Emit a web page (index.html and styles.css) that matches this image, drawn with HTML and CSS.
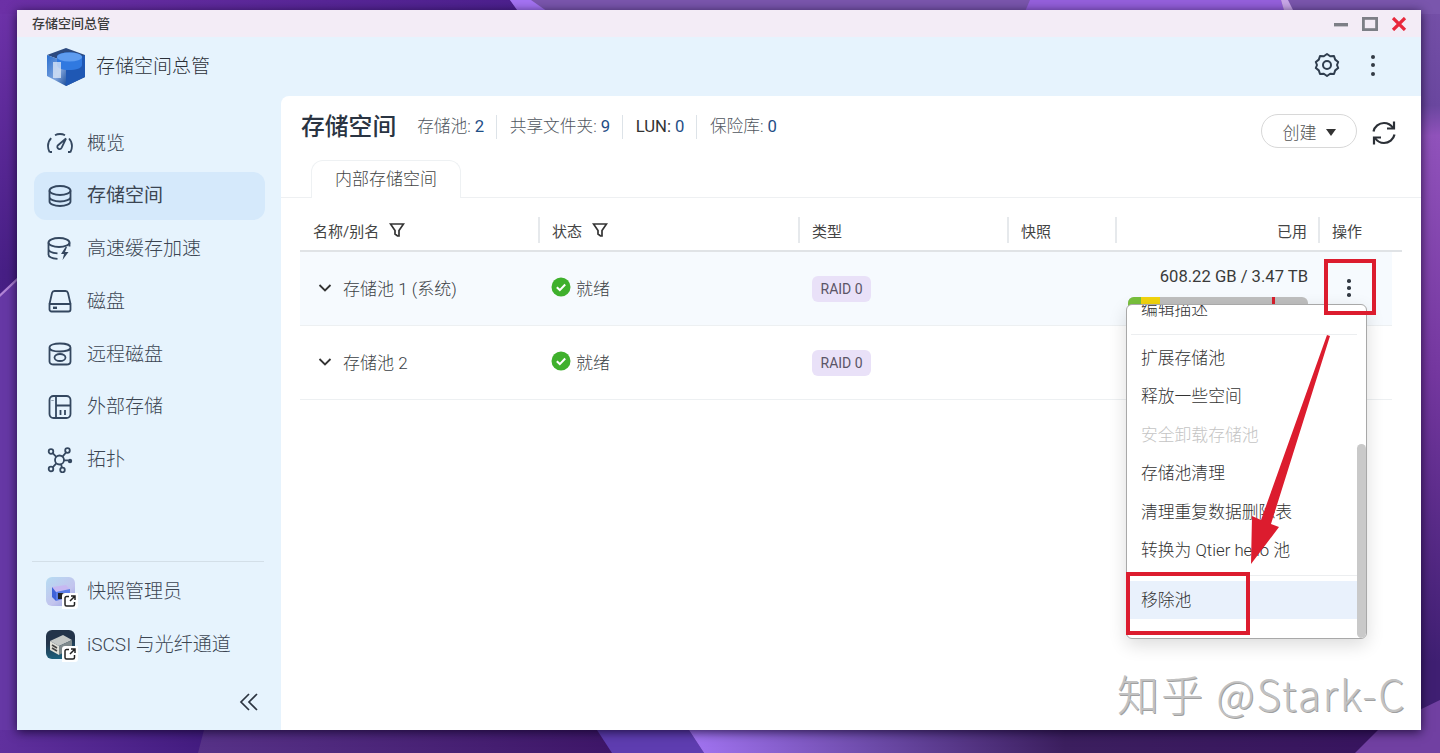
FILE: index.html
```html
<!DOCTYPE html>
<html lang="zh-CN">
<head>
  <meta charset="UTF-8">
  <title>存储空间总管</title>
  <link rel="stylesheet" href="styles.css">
</head>
<body>

<div class="desktop">
  <!-- wallpaper -->
  <svg class="wallpaper" width="1440" height="753" viewBox="0 0 1440 753">
    <defs>
      <linearGradient id="wpBase" x1="0" y1="0" x2="0" y2="1">
        <stop offset="0" stop-color="#6f33aa"/>
        <stop offset="0.36" stop-color="#471f85"/>
        <stop offset="1" stop-color="#3f1a70"/>
      </linearGradient>
      <linearGradient id="wpRight" x1="0" y1="0" x2="0" y2="1">
        <stop offset="0" stop-color="#7550a8"/>
        <stop offset="0.14" stop-color="#6a479f"/>
        <stop offset="0.18" stop-color="#9052bb"/>
        <stop offset="0.5" stop-color="#74379f"/>
        <stop offset="0.88" stop-color="#3f1f72"/>
      </linearGradient>
      <linearGradient id="wpGlow" x1="0" y1="0" x2="1" y2="0">
        <stop offset="0" stop-color="#a274f2"/>
        <stop offset="0.25" stop-color="#6c4aa8"/>
        <stop offset="0.5" stop-color="#3c1f5f"/>
        <stop offset="1" stop-color="#37125f"/>
      </linearGradient>
      <linearGradient id="wpTopLeft" x1="0" y1="0" x2="1" y2="0">
        <stop offset="0" stop-color="#6c30a6"/>
        <stop offset="1" stop-color="#4c208e"/>
      </linearGradient>
      <linearGradient id="wpBottomLeft" x1="0" y1="0" x2="1" y2="0">
        <stop offset="0" stop-color="#60309e"/>
        <stop offset="1" stop-color="#431c80"/>
      </linearGradient>
      <linearGradient id="wpBottomMid" x1="0" y1="0" x2="1" y2="0">
        <stop offset="0" stop-color="#573288"/>
        <stop offset="1" stop-color="#3e1668"/>
      </linearGradient>
    </defs>
    <rect width="1440" height="753" fill="url(#wpBase)"/>
    <rect width="520" height="14" fill="url(#wpTopLeft)"/>
    <rect x="1400" width="40" height="753" fill="url(#wpRight)"/>
    <polygon points="510,0 1440,0 1440,14 520,14" fill="#7a56ad"/>
    <polygon points="510,0 531,0 551,14 520,14" fill="#a473f3"/>
    <polygon points="1030,0 1281,0 1285,14 1024,14" fill="#9560dc"/>
    <polygon points="1281,0 1288,0 1295,14 1285,14" fill="#c9a6e8"/>
    <polygon points="0,294 17,278 17,753 0,753" fill="#6638a5"/>
    <polygon points="0,294 17,278 17,281 0,297" fill="#b184d6"/>
    <rect y="730" width="204" height="23" fill="url(#wpBottomLeft)"/>
    <polygon points="204,730 600,730 615,753 198,753" fill="url(#wpBottomMid)"/>
    <polygon points="597,730 689,730 704,753 612,753" fill="#5e3db0"/>
    <polygon points="689,730 1440,730 1440,753 704,753" fill="url(#wpGlow)"/>
    <polygon points="1378,730 1440,700 1440,753 1355,753" fill="#7140a2"/>
  </svg>

  <div class="window">
    <div class="titlebar">
      <span class="titlebar-name">存储空间总管</span>
      <div class="win-controls">
        <svg width="16" height="14" viewBox="0 0 16 14"><rect x="1" y="6" width="14" height="3.4" fill="#7c7f86"/></svg>
        <svg width="16" height="14" viewBox="0 0 16 14"><rect x="1.4" y="1.4" width="13.2" height="11.2" fill="none" stroke="#7c7f86" stroke-width="2.8"/></svg>
        <svg width="16" height="14" viewBox="0 0 16 14"><path d="M2 1l12 12M14 1L2 13" stroke="#e8283c" stroke-width="3.2" fill="none"/></svg>
      </div>
    </div>

    <div class="appbar">
      <svg class="logo" width="40" height="38" viewBox="0 0 40 38">
        <defs>
          <linearGradient id="logoLeft" x1="0" y1="0" x2="1" y2="1">
            <stop offset="0" stop-color="#2a6fd0"/>
            <stop offset="0.6" stop-color="#7fa4dc"/>
            <stop offset="1" stop-color="#1d4f9c"/>
          </linearGradient>
        </defs>
        <polygon points="20,0 39,7 39,29 20,38 20,14 1,7" fill="#2c4a80"/>
        <polygon points="1,7 20,14 20,38 1,28" fill="url(#logoLeft)"/>
        <polygon points="20,14 39,7 39,29 20,38" fill="#1f58b4"/>
        <path d="M11 9c0-3 5-4.500 12-4.500S36 6 36 9v8c0 3-6 5-13 5s-12-2-12-5z" fill="#3079e0"/>
        <ellipse cx="23.500" cy="9" rx="12.500" ry="4.500" fill="#5e9cf0"/>
        <rect x="7" y="14" width="8" height="16" fill="#dfe9f8" opacity="0.75"/>
      </svg>
      <span class="app-name">存储空间总管</span>
      <svg class="gear" width="26" height="26" viewBox="0 0 26 26" fill="none" stroke="#2f3d4e" stroke-width="2">
        <path d="M13 2l3.200 2.200 3.800-.2 1.200 3.600 3 2.400-1.200 3 1.200 3-3 2.400-1.200 3.600-3.800-.2L13 24l-3.200-2.200-3.800.2-1.200-3.600-3-2.400 1.200-3-1.200-3 3-2.400L6 4l3.800.2z" stroke-linejoin="round"/>
        <circle cx="13" cy="13" r="4"/>
      </svg>
      <div class="kebab kebab-large"><i></i><i></i><i></i></div>
    </div>

    <div class="body">
      <aside class="sidebar">
        <nav class="nav">
          <a class="nav-item">
            <svg width="26" height="24" viewBox="0 0 26 24" class="nav-icon"><path d="M2.500 21C1.500 19 1 17 1 15c0-3 1.200-5.800 3.200-7.800M8 4.200C9.500 3.400 11.200 3 13 3c2 0 3.500.4 5 1.200M22 7.500c1.900 2 3 4.600 3 7.500 0 2-.5 4-1.500 6M2.500 21H5M21 21h2.500"/><path d="M19 7.500l-8 6.700c-1.200 1.200-.8 3 .6 3.600s2.500 0 3.100-1.200z"/></svg>
            概览
          </a>
          <a class="nav-item active">
            <svg width="26" height="24" viewBox="0 0 26 24" class="nav-icon"><ellipse cx="13" cy="6.500" rx="10.500" ry="4.500"/><path d="M2.500 6.500v11c0 2.500 4.700 4.500 10.500 4.500s10.500-2 10.500-4.500v-11M2.500 13c0 2.500 4.700 4.500 10.500 4.500S23.500 15.500 23.500 13"/></svg>
            存储空间
          </a>
          <a class="nav-item">
            <svg width="26" height="24" viewBox="0 0 26 24" class="nav-icon"><ellipse cx="12" cy="5.500" rx="10.500" ry="4.500"/><path d="M1.500 5.500v12c0 2.500 4 4 9 4.300M22.500 5.500v4M1.500 12c0 2.500 4 4 9 4.300"/><path class="fill" d="M18.500 10l-4.500 7h3l-1.500 6 6-8h-3.500l2-5z"/></svg>
            高速缓存加速
          </a>
          <a class="nav-item">
            <svg width="26" height="24" viewBox="0 0 26 24" class="nav-icon"><path d="M2.500 15l2.500-11c.3-1.200 1.200-2 2.500-2h11c1.300 0 2.200.8 2.500 2l2.500 11M2.500 15h21v5.500c0 1.100-.9 2-2 2h-17c-1.100 0-2-.9-2-2z"/><path class="thick" d="M6 18.800h4"/></svg>
            磁盘
          </a>
          <a class="nav-item">
            <svg width="26" height="24" viewBox="0 0 26 24" class="nav-icon"><path d="M2.500 5.500C2.500 3 7.200 1.500 13 1.500s10.500 1.500 10.500 4v14c0 2-2 3-4 3h-13c-2 0-4-1-4-3zM2.500 5.500c0 2.500 4.700 4 10.500 4s10.500-1.500 10.500-4"/><ellipse cx="13" cy="15.500" rx="5.500" ry="3.500"/></svg>
            远程磁盘
          </a>
          <a class="nav-item">
            <svg width="26" height="24" viewBox="0 0 26 24" class="nav-icon"><rect x="2.500" y="1" width="21" height="22" rx="4"/><path d="M9 1v9.500h14.500M9 10.500V23M13.500 15v5M18 15v5"/><path class="thick" d="M5.500 5.500v.5"/></svg>
            外部存储
          </a>
          <a class="nav-item">
            <svg width="26" height="26" viewBox="0 0 26 26" class="nav-icon"><circle cx="12.500" cy="13" r="4.500"/><circle cx="4" cy="4.500" r="2.300"/><circle cx="20.500" cy="3.500" r="2.300"/><circle cx="4" cy="22" r="2.300"/><circle cx="15.500" cy="23" r="2.300"/><circle class="fill" cx="23" cy="14" r="2.200"/><path d="M5.700 6.200l3.600 3.600M19 5.500l-3.500 4.200M5.700 20.300l3.600-4M14 17.300l1 3.500M17 13.400h4"/></svg>
            拓扑
          </a>
        </nav>

        <div class="shortcuts">
          <a class="nav-item shortcut">
            <span class="app-icon app-icon-snap">
              <svg class="app-art" width="29" height="29" viewBox="0 0 29 29"><polygon points="6,10 20,8 24,12 10,15" fill="#c7b8f2"/><polygon points="6,10 10,15 10,24 6,20" fill="#3f62d8"/><polygon points="10,15 24,12 24,20 10,24" fill="#5a7ce8"/><rect x="12" y="16" width="7" height="6" fill="#23252c"/></svg>
              <svg class="ext" width="14" height="14" viewBox="0 0 14 14"><path d="M6 2.500H3.500c-.8 0-1.500.7-1.500 1.500v6.500c0 .8.700 1.500 1.500 1.500H10c.8 0 1.500-.7 1.500-1.500V8M8 2h4v4M12 2L7 7"/></svg>
            </span>
            快照管理员
          </a>
          <a class="nav-item shortcut">
            <span class="app-icon app-icon-iscsi">
              <svg class="app-art" width="29" height="29" viewBox="0 0 29 29"><polygon points="4,11 17,5 26,10 13,16" fill="#c4c8c6"/><polygon points="4,11 13,16 13,25 4,20" fill="#e0e0d8"/><polygon points="13,16 26,10 26,18 13,25" fill="#7f8a8c"/><path d="M6 15l5 3M6 18l5 3" stroke="#444" stroke-width="1.500"/></svg>
              <svg class="ext" width="14" height="14" viewBox="0 0 14 14"><path d="M6 2.500H3.500c-.8 0-1.500.7-1.500 1.500v6.500c0 .8.700 1.500 1.500 1.500H10c.8 0 1.500-.7 1.500-1.500V8M8 2h4v4M12 2L7 7"/></svg>
            </span>
            iSCSI 与光纤通道
          </a>
        </div>
        <div class="collapse-row">
          <svg width="20" height="18" viewBox="0 0 20 18" fill="none" stroke="#2c3440" stroke-width="1.700"><path d="M10 1L2 9l8 8M18 1l-8 8 8 8"/></svg>
        </div>
      </aside>

      <main class="main">
        <div class="main-head">
          <h1 class="page-title">存储空间</h1>
          <ul class="stats">
            <li>存储池: <b>2</b></li>
            <li>共享文件夹: <b>9</b></li>
            <li><em>LUN:</em> <b>0</b></li>
            <li>保险库: <b>0</b></li>
          </ul>
          <button class="btn-create">创建<span class="caret"></span></button>
          <svg class="refresh" width="28" height="28" viewBox="0 0 28 28" fill="none" stroke="#2b2f36" stroke-width="2.200">
            <path d="M3.500 12.500C4.500 7.500 9 4 14 4c4 0 7 2 9 5M24.500 15.500c-1 5-5.500 8.500-10.500 8.500-4 0-7-2-9-5"/>
            <path d="M24 2.500V9.500h-7M4 25.500V18.500h7"/>
          </svg>
        </div>

        <div class="tabs">
          <div class="tab">内部存储空间</div>
        </div>

        <div class="table">
          <div class="thead">
            <div class="th">名称/别名
              <svg width="16" height="16" viewBox="0 0 16 16" class="filter"><path d="M1.500 2h13L10 8.500V14H8.500L6 12V8.500z"/></svg>
            </div>
            <div class="th">状态
              <svg width="16" height="16" viewBox="0 0 16 16" class="filter"><path d="M1.500 2h13L10 8.500V14H8.500L6 12V8.500z"/></svg>
            </div>
            <div class="th">类型</div>
            <div class="th">快照</div>
            <div class="th th-right">已用</div>
            <div class="th">操作</div>
          </div>

          <div class="tr tr-hover">
            <div class="td td-name">
              <svg width="14" height="14" viewBox="0 0 14 14" class="chevron"><path d="M1.500 4L7 9.500 12.500 4"/></svg>
              存储池 1 (系统)
            </div>
            <div class="td td-status">
              <svg width="20" height="20" viewBox="0 0 20 20"><circle cx="10" cy="10" r="9.500" fill="#3fb02c"/><path d="M5.800 10.300l3 2.800 5.400-5.600" fill="none" stroke="#fff" stroke-width="2"/></svg>
              就绪
            </div>
            <div class="td td-type"><span class="badge">RAID 0</span></div>
            <div class="td"></div>
            <div class="td td-used">
              <span>608.22 GB / 3.47 TB</span>
              <div class="usage">
                <i class="usage-green"></i>
                <i class="usage-yellow"></i>
                <i class="usage-mark"></i>
              </div>
            </div>
            <div class="td td-op"><div class="kebab"><i></i><i></i><i></i></div></div>
          </div>

          <div class="tr">
            <div class="td td-name">
              <svg width="14" height="14" viewBox="0 0 14 14" class="chevron"><path d="M1.500 4L7 9.500 12.500 4"/></svg>
              存储池 2
            </div>
            <div class="td td-status">
              <svg width="20" height="20" viewBox="0 0 20 20"><circle cx="10" cy="10" r="9.500" fill="#3fb02c"/><path d="M5.800 10.300l3 2.800 5.400-5.600" fill="none" stroke="#fff" stroke-width="2"/></svg>
              就绪
            </div>
            <div class="td td-type"><span class="badge">RAID 0</span></div>
            <div class="td"></div>
            <div class="td"></div>
            <div class="td"></div>
          </div>
        </div>

        <!-- pool action menu, scrolled a little -->
        <div class="menu">
          <div class="menu-list">
            <div class="menu-item">编辑描述</div>
            <div class="menu-sep"></div>
            <div class="menu-item">扩展存储池</div>
            <div class="menu-item">释放一些空间</div>
            <div class="menu-item disabled">安全卸载存储池</div>
            <div class="menu-item">存储池清理</div>
            <div class="menu-item">清理重复数据删除表</div>
            <div class="menu-item">转换为 Qtier hello 池</div>
            <div class="menu-sep"></div>
            <div class="menu-item selected">移除池</div>
          </div>
          <div class="menu-scroll"></div>
        </div>
      </main>
    </div>
  </div>

  <!-- red marks drawn on top of the screenshot -->
  <svg class="marks" width="1440" height="753" viewBox="0 0 1440 753">
    <rect x="1326" y="261" width="48" height="52" fill="none" stroke="#dc1c2e" stroke-width="4"/>
    <rect x="1128" y="574" width="120" height="59" fill="none" stroke="#dc1c2e" stroke-width="4"/>
    <polygon points="1327,335 1330,336 1271,524 1279,527 1251,564 1252,516 1261,520" fill="#dc1c2e"/>
  </svg>

  <div class="watermark">知乎 @Stark-C</div>
</div>

</body>
</html>
```

FILE: styles.css
```css
* {
  box-sizing: border-box;
}
body {
  margin: 0;
  font-family: Roboto, "Noto Sans CJK SC", sans-serif;
  color: #333;
}
.desktop {
  position: relative;
  width: 1440px;
  height: 753px;
  overflow: hidden;
  padding: 10px 19px 23px 17px;
  background: #471f85;
}
.wallpaper {
  position: absolute;
  top: 0;
  left: 0;
}
.marks {
  position: absolute;
  top: 0;
  left: 0;
}
.watermark {
  position: absolute;
  left: 1117px;
  top: 665px;
  font-family: "Noto Sans CJK SC", sans-serif;
  font-weight: 300;
  font-size: 42px;
  line-height: 56px;
  letter-spacing: 2px;
  white-space: nowrap;
  color: #c2c2c2;
  text-shadow: 1px 1px 0 #a0a0a0;
}

/* window */
.window {
  position: relative;
  height: 720px;
  display: flex;
  flex-direction: column;
  background: #e6f3fd;
  box-shadow: 0 2px 10px rgba(10, 0, 30, 0.75);
}
.titlebar {
  height: 27px;
  flex: none;
  display: flex;
  align-items: center;
  justify-content: space-between;
  padding: 0 14px 0 15px;
  background: #f3ecf6;
}
.titlebar-name {
  font-size: 13px;
  font-weight: 500;
  color: #3a3a3a;
  margin-top: -2px;
}
.win-controls {
  display: flex;
  gap: 13px;
  align-items: center;
}
.appbar {
  height: 59px;
  flex: none;
  display: flex;
  align-items: center;
  padding: 0 46px 0 29px;
  background: #e6f3fd;
}
.logo {
  margin-right: 10px;
}
.app-name {
  font-size: 19px;
  font-weight: 300;
  color: #2b3038;
  flex: 1;
  margin-top: -4px;
}
.gear {
  margin: -4px 31px 0 0;
}
.kebab {
  display: flex;
  flex-direction: column;
  gap: 3.5px;
  align-items: center;
}
.kebab i {
  width: 3.5px;
  height: 3.5px;
  border-radius: 50%;
  background: #333a44;
}
.kebab-large {
  gap: 4.5px;
  margin-top: -3px;
}
.kebab-large i {
  width: 4px;
  height: 4px;
}
.body {
  flex: 1;
  display: flex;
  min-height: 0;
}

/* sidebar */
.sidebar {
  width: 264px;
  flex: none;
  display: flex;
  flex-direction: column;
  padding-top: 23px;
}
.nav {
  flex: 1;
  display: flex;
  flex-direction: column;
  gap: 4.75px;
  margin: 0 16px 0 17px;
}
.nav-item {
  height: 48px;
  display: flex;
  align-items: center;
  gap: 14px;
  padding: 0 0 4px 13px;
  border-radius: 12px;
  font-size: 19px;
  font-weight: 300;
  color: #3b4552;
}
.nav-item.active {
  background: #d5e9fb;
  font-weight: 400;
}
.nav-icon {
  flex: none;
  margin-top: 4px;
  fill: none;
  stroke: #34475f;
  stroke-width: 1.8;
}
.nav-icon .fill {
  fill: #34475f;
  stroke: none;
}
.nav-icon .thick {
  stroke-width: 2.4;
}
.shortcuts {
  margin: 0 17px 0 15px;
  padding-top: 5px;
  border-top: 1px solid #d3dfe8;
  display: flex;
  flex-direction: column;
  gap: 5px;
  height: 114px;
}
.shortcut {
  padding-left: 14px;
  gap: 12px;
}
.app-icon {
  position: relative;
  width: 29px;
  height: 29px;
  flex: none;
  margin-top: 4px;
  border-radius: 6px;
}
.app-icon-snap {
  background: linear-gradient(140deg, #b6dcf2, #c3c4ee 60%, #8fa0e0);
}
.app-icon-iscsi {
  background: linear-gradient(170deg, #23344a 40%, #1c6a88);
}
.app-art {
  display: block;
  border-radius: 6px;
}
.ext {
  position: absolute;
  right: -3px;
  bottom: -3px;
  width: 16px;
  height: 16px;
  padding: 1px;
  background: #fff;
  border-radius: 3px 0 3px 0;
  fill: none;
  stroke: #222;
  stroke-width: 1.5;
}
.collapse-row {
  height: 55px;
  display: flex;
  justify-content: flex-end;
  padding: 18px 22px 0 0;
}

/* main panel */
.main {
  position: relative;
  flex: 1;
  background: #fff;
  border-top-left-radius: 8px;
  min-width: 0;
}
.main-head {
  height: 64px;
  display: flex;
  align-items: flex-start;
  padding: 16px 23px 0 20px;
}
.page-title {
  margin: 0 21px 0 0;
  font-size: 23.8px;
  line-height: 30px;
  font-weight: 500;
  color: #2a3442;
}
.stats {
  list-style: none;
  margin: 0;
  padding: 3px 0 0;
  display: flex;
  flex: 1;
  font-size: 16.7px;
  line-height: 24px;
  font-weight: 300;
  color: #50565e;
}
.stats li {
  padding-right: 11.5px;
  margin-right: 13px;
  border-right: 1px solid #dde3e8;
}
.stats li:last-child {
  border-right: none;
}
.stats b {
  font-weight: 400;
  color: #1f4e86;
}
.stats em {
  font-style: normal;
  font-weight: 400;
  color: #333;
}
.btn-create {
  width: 96px;
  height: 34px;
  margin: 2px 13px 0 0;
  border: 1px solid #d8d8d8;
  border-radius: 17px;
  background: #fff;
  font-family: inherit;
  font-size: 17px;
  font-weight: 300;
  color: #555;
  display: flex;
  align-items: center;
  justify-content: center;
  gap: 9px;
}
.caret {
  width: 0;
  height: 0;
  border-left: 5.5px solid transparent;
  border-right: 5.5px solid transparent;
  border-top: 7px solid #333;
  margin-top: 2px;
}
.refresh {
  margin-top: 7px;
}
.tabs {
  height: 38px;
  padding-left: 30px;
  border-bottom: 1px solid #eef0f2;
}
.tab {
  width: 150px;
  height: 38px;
  border: 1px solid #eef1f3;
  border-bottom: none;
  border-radius: 12px 12px 0 0;
  background: #fff;
  text-align: center;
  line-height: 36px;
  font-size: 17px;
  font-weight: 300;
  color: #444;
}

/* table */
.table {
  margin-left: 19px;
  width: 1102px;
}
.thead,
.tr {
  display: grid;
}
.thead {
  height: 54px;
  padding-top: 12px;
  grid-template-columns: 238px 260px 209px 108px 203px 84px;
  align-items: center;
  border-bottom: 2px solid #e0e3e6;
}
.th {
  height: 26px;
  display: flex;
  align-items: center;
  gap: 10px;
  padding-left: 12px;
  border-left: 2px solid #e6e9ec;
  font-size: 15px;
  color: #444;
}
.th:first-child {
  border-left: none;
  padding-left: 13px;
}
.th-right {
  justify-content: flex-end;
  padding-right: 11px;
}
.filter {
  fill: none;
  stroke: #333;
  stroke-width: 1.7;
}
.tr {
  height: 74px;
  width: 1092px;
  grid-template-columns: 240px 260px 209px 108px 203px 72px;
  align-items: center;
  border-bottom: 1px solid #edf0f2;
  font-size: 17px;
  font-weight: 300;
  color: #3b3f45;
}
.tr-hover {
  background: #f6fafe;
}
.td {
  min-width: 0;
  display: flex;
  align-items: center;
}
.td-name {
  padding-left: 18px;
  gap: 11px;
  margin-top: -3px;
}
.chevron {
  margin-top: 2px;
  fill: none;
  stroke: #333;
  stroke-width: 1.8;
}
.td-status {
  padding-left: 11px;
  gap: 5px;
  margin-top: -3px;
}
.td-type {
  padding-left: 12px;
}
.badge {
  height: 26px;
  padding: 0 8.5px;
  border-radius: 6px;
  background: #e9e1f8;
  font-size: 14px;
  font-weight: 400;
  line-height: 26px;
  color: #5b5566;
}
.td-used {
  flex-direction: column;
  align-items: flex-end;
  padding-right: 12px;
  align-self: start;
  padding-top: 14px;
  font-size: 16.6px;
  font-weight: 400;
  line-height: 22px;
  color: #3a3a3a;
}
.usage {
  position: relative;
  width: 180px;
  height: 14px;
  margin-top: 9px;
  display: flex;
  background: #bfbfbf;
  border-radius: 6px 6px 0 0;
  overflow: hidden;
}
.usage-green {
  width: 13px;
  background: #78c03c;
}
.usage-yellow {
  width: 19px;
  background: #f1d40e;
}
.usage-mark {
  position: absolute;
  left: 144px;
  top: 0;
  width: 3px;
  height: 14px;
  background: #d81e2c;
}
.td-op {
  justify-content: flex-start;
  padding-left: 27px;
  margin-top: -1px;
}

/* action menu */
.menu {
  position: absolute;
  left: 845px;
  top: 208px;
  width: 241px;
  height: 335px;
  overflow: hidden;
  background: #fff;
  border: 1px solid #a8a8a8;
  border-radius: 6px;
  box-shadow: 0 6px 18px rgba(0, 0, 0, 0.14);
}
.menu-list {
  margin-top: -14px;
  padding-right: 9px;
}
.menu-item {
  height: 38.5px;
  padding-left: 14px;
  font-size: 16.8px;
  font-weight: 300;
  line-height: 36px;
  color: #333;
}
.menu-item.disabled {
  color: #c4c4c4;
}
.menu-item.selected {
  background: #e9f1fc;
  line-height: 38px;
}
.menu-sep {
  height: 10px;
  margin: 0 0 0 4px;
  background: linear-gradient(#eceef0, #eceef0) center / 100% 1px no-repeat;
}
.menu-scroll {
  position: absolute;
  right: 0;
  top: 139px;
  bottom: 0;
  width: 9px;
  border-radius: 5px;
  background: #c9c9c9;
}
```
